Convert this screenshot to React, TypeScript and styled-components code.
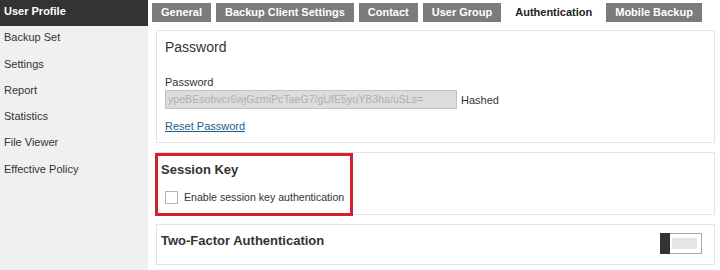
import styled, { createGlobalStyle } from "styled-components";

const GlobalStyle = createGlobalStyle`
  html, body {
    margin: 0;
    padding: 0;
    background: #ffffff;
    font-family: "Liberation Sans", Arial, sans-serif;
    color: #333333;
  }
`;

const Page = styled.div`
  display: flex;
  width: 720px;
  height: 270px;
  overflow: hidden;
`;

const Sidebar = styled.nav`
  width: 148px;
  flex-shrink: 0;
  background: #f0f0f0;
  display: flex;
  flex-direction: column;
`;

const NavItem = styled.div<{ $active?: boolean }>`
  height: 26.3px;
  line-height: 22px;
  padding-left: 4px;
  font-size: 11px;
  font-weight: ${(p) => (p.$active ? "bold" : "normal")};
  color: ${(p) => (p.$active ? "#ffffff" : "#333333")};
  background: ${(p) => (p.$active ? "#333333" : "transparent")};
  box-sizing: border-box;
`;

const Main = styled.main`
  flex: 1;
  display: flex;
  flex-direction: column;
  padding-top: 3px;
`;

const TabBar = styled.div`
  display: flex;
  gap: 5px;
  margin-left: 4px;
  height: 19px;
`;

const Tab = styled.div<{ $active?: boolean }>`
  padding: 0 9px;
  line-height: 19px;
  font-size: 11px;
  font-weight: bold;
  color: ${(p) => (p.$active ? "#222222" : "#ffffff")};
  background: ${(p) => (p.$active ? "#ffffff" : "#7b7b7b")};
  white-space: nowrap;
`;

const Panels = styled.div`
  display: flex;
  flex-direction: column;
  gap: 9px;
  margin: 8px 5px 0 8px;
`;

const Panel = styled.section<{ $height: number; $padX: number; $padTop: number }>`
  position: relative;
  box-sizing: border-box;
  height: ${(p) => p.$height}px;
  border: 1px solid #e4e4e4;
  padding: ${(p) => p.$padTop}px ${(p) => p.$padX}px 0 ${(p) => p.$padX}px;
  display: flex;
  flex-direction: column;
`;

const Heading = styled.h2<{ $bold?: boolean }>`
  margin: 0;
  font-size: ${(p) => (p.$bold ? 13 : 14)}px;
  line-height: 16px;
  font-weight: ${(p) => (p.$bold ? "bold" : "normal")};
  color: #333333;
`;

const FieldLabel = styled.div`
  margin-top: 20.5px;
  font-size: 11px;
  line-height: 13px;
`;

const FieldRow = styled.div`
  display: flex;
  align-items: center;
  gap: 4px;
  margin-top: 1.5px;
`;

const HashInput = styled.div`
  box-sizing: border-box;
  width: 292px;
  height: 19px;
  border: 1px solid #c2c2c2;
  background: #dcdcdc;
  color: #b0b0b0;
  font-size: 10.6px;
  line-height: 17px;
  padding-left: 2px;
  white-space: nowrap;
  overflow: hidden;
`;

const Note = styled.span`
  font-size: 11px;
`;

const Link = styled.a`
  margin-top: 10.5px;
  font-size: 11px;
  line-height: 13px;
  color: #1d5d8c;
  text-decoration: underline;
  align-self: flex-start;
`;

const Highlight = styled.div`
  position: absolute;
  left: -2px;
  top: 0;
  width: 198px;
  height: 63px;
  box-sizing: border-box;
  border: 3px solid #d3202d;
  pointer-events: none;
`;

const CheckRow = styled.label`
  display: flex;
  align-items: center;
  gap: 6px;
  margin-top: 12.5px;
  padding-left: 4px;
  font-size: 10.6px;
  line-height: 13px;
`;

const Box = styled.span`
  width: 13px;
  height: 13px;
  box-sizing: border-box;
  border: 1px solid #b4b4b4;
  background: #ffffff;
`;

const HeaderRow = styled.div`
  display: flex;
  justify-content: space-between;
  align-items: flex-start;
`;

const Toggle = styled.div`
  box-sizing: border-box;
  width: 42px;
  height: 21px;
  border: 1px solid #aaaaaa;
  background: #ffffff;
  margin-right: 8px;
  display: flex;
  align-items: center;
`;

const Knob = styled.span`
  align-self: stretch;
  width: 10px;
  margin: -1px 0 -1px -1px;
  background: #333333;
`;

const Track = styled.span`
  width: 25px;
  height: 11px;
  margin-left: 2px;
  background: #e5e5e5;
`;

const navItems = ["User Profile", "Backup Set", "Settings", "Report", "Statistics", "File Viewer", "Effective Policy"];
const tabs = ["General", "Backup Client Settings", "Contact", "User Group", "Authentication", "Mobile Backup"];

export default function App() {
  return (
    <>
      <GlobalStyle />
      <Page>
        <Sidebar>
          {navItems.map((n, i) => (
            <NavItem key={n} $active={i === 0}>
              {n}
            </NavItem>
          ))}
        </Sidebar>
        <Main>
          <TabBar>
            {tabs.map((t) => (
              <Tab key={t} $active={t === "Authentication"}>
                {t}
              </Tab>
            ))}
          </TabBar>
          <Panels>
            <Panel $height={113} $padX={8} $padTop={8}>
              <Heading>Password</Heading>
              <FieldLabel>Password</FieldLabel>
              <FieldRow>
                <HashInput>ypeBEsobvcr6wjGzmiPcTaeG7/gUfE5yuYB3ha/uSLs=</HashInput>
                <Note>Hashed</Note>
              </FieldRow>
              <Link href="#">Reset Password</Link>
            </Panel>
            <Panel $height={63} $padX={4} $padTop={9}>
              <Heading $bold>Session Key</Heading>
              <CheckRow>
                <Box />
                Enable session key authentication
              </CheckRow>
              <Highlight />
            </Panel>
            <Panel $height={41} $padX={4} $padTop={8}>
              <HeaderRow>
                <Heading $bold>Two-Factor Authentication</Heading>
                <Toggle>
                  <Knob />
                  <Track />
                </Toggle>
              </HeaderRow>
            </Panel>
          </Panels>
        </Main>
      </Page>
    </>
  );
}
